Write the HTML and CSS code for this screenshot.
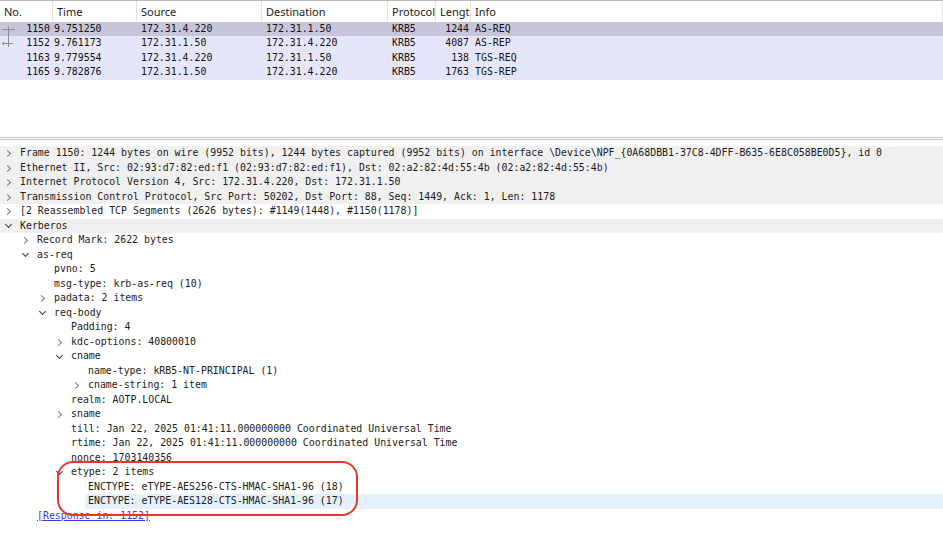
FILE: index.html
```html
<!DOCTYPE html>
<html>
<head>
<meta charset="utf-8">
<link rel="stylesheet" href="styles.css">
</head>
<body>
<div class="app">
  <section class="plist">
    <div class="prow phead">
      <div class="c c-no">No.</div>
      <div class="c c-time">Time</div>
      <div class="c c-src">Source</div>
      <div class="c c-dst">Destination</div>
      <div class="c c-proto">Protocol</div>
      <div class="c c-len">Length</div>
      <div class="c c-info">Info</div>
    </div>
    <div class="prow pdata sel">
      <div class="c c-no"><svg class="rel" width="14" height="14" viewBox="0 0 14 14"><path d="M1 7.5H14M7.5 4V14" stroke="#8f8f8f" stroke-width="1" fill="none"/></svg>1150</div>
      <div class="c c-time">9.751250</div>
      <div class="c c-src">172.31.4.220</div>
      <div class="c c-dst">172.31.1.50</div>
      <div class="c c-proto">KRB5</div>
      <div class="c c-len">1244</div>
      <div class="c c-info">AS-REQ</div>
    </div>
    <div class="prow pdata">
      <div class="c c-no"><svg class="rel" width="14" height="14" viewBox="0 0 14 14"><path d="M7.5 0V11M1 7.5H12M1 7.5L3 6M1 7.5L3 9" stroke="#8f8f8f" stroke-width="1" fill="none"/></svg>1152</div>
      <div class="c c-time">9.761173</div>
      <div class="c c-src">172.31.1.50</div>
      <div class="c c-dst">172.31.4.220</div>
      <div class="c c-proto">KRB5</div>
      <div class="c c-len">4087</div>
      <div class="c c-info">AS-REP</div>
    </div>
    <div class="prow pdata">
      <div class="c c-no">1163</div>
      <div class="c c-time">9.779554</div>
      <div class="c c-src">172.31.4.220</div>
      <div class="c c-dst">172.31.1.50</div>
      <div class="c c-proto">KRB5</div>
      <div class="c c-len">138</div>
      <div class="c c-info">TGS-REQ</div>
    </div>
    <div class="prow pdata">
      <div class="c c-no">1165</div>
      <div class="c c-time">9.782876</div>
      <div class="c c-src">172.31.1.50</div>
      <div class="c c-dst">172.31.4.220</div>
      <div class="c c-proto">KRB5</div>
      <div class="c c-len">1763</div>
      <div class="c c-info">TGS-REP</div>
    </div>
  </section>

  <section class="tree">
    <div class="trow grey l0"><span class="tw closed"></span><span class="tl">Frame 1150: 1244 bytes on wire (9952 bits), 1244 bytes captured (9952 bits) on interface \Device\NPF_{0A68DBB1-37C8-4DFF-B635-6E8C058BE0D5}, id 0</span></div>
    <div class="trow grey l0"><span class="tw closed"></span><span class="tl">Ethernet II, Src: 02:93:d7:82:ed:f1 (02:93:d7:82:ed:f1), Dst: 02:a2:82:4d:55:4b (02:a2:82:4d:55:4b)</span></div>
    <div class="trow grey l0"><span class="tw closed"></span><span class="tl">Internet Protocol Version 4, Src: 172.31.4.220, Dst: 172.31.1.50</span></div>
    <div class="trow grey l0"><span class="tw closed"></span><span class="tl">Transmission Control Protocol, Src Port: 50202, Dst Port: 88, Seq: 1449, Ack: 1, Len: 1178</span></div>
    <div class="trow l0"><span class="tw closed"></span><span class="tl">[2 Reassembled TCP Segments (2626 bytes): #1149(1448), #1150(1178)]</span></div>
    <div class="trow grey l0"><span class="tw open"></span><span class="tl">Kerberos</span></div>
    <div class="trow l1"><span class="tw closed"></span><span class="tl">Record Mark: 2622 bytes</span></div>
    <div class="trow l1"><span class="tw open"></span><span class="tl">as-req</span></div>
    <div class="trow l2"><span class="tw"></span><span class="tl">pvno: 5</span></div>
    <div class="trow l2"><span class="tw"></span><span class="tl">msg-type: krb-as-req (10)</span></div>
    <div class="trow l2"><span class="tw closed"></span><span class="tl">padata: 2 items</span></div>
    <div class="trow l2"><span class="tw open"></span><span class="tl">req-body</span></div>
    <div class="trow l3"><span class="tw"></span><span class="tl">Padding: 4</span></div>
    <div class="trow l3"><span class="tw closed"></span><span class="tl">kdc-options: 40800010</span></div>
    <div class="trow l3"><span class="tw open"></span><span class="tl">cname</span></div>
    <div class="trow l4"><span class="tw"></span><span class="tl">name-type: kRB5-NT-PRINCIPAL (1)</span></div>
    <div class="trow l4"><span class="tw closed"></span><span class="tl">cname-string: 1 item</span></div>
    <div class="trow l3"><span class="tw"></span><span class="tl">realm: AOTP.LOCAL</span></div>
    <div class="trow l3"><span class="tw closed"></span><span class="tl">sname</span></div>
    <div class="trow l3"><span class="tw"></span><span class="tl">till: Jan 22, 2025 01:41:11.000000000 Coordinated Universal Time</span></div>
    <div class="trow l3"><span class="tw"></span><span class="tl">rtime: Jan 22, 2025 01:41:11.000000000 Coordinated Universal Time</span></div>
    <div class="trow l3"><span class="tw"></span><span class="tl">nonce: 1703140356</span></div>
    <div class="trow l3"><span class="tw open"></span><span class="tl">etype: 2 items</span></div>
    <div class="trow l4"><span class="tw"></span><span class="tl">ENCTYPE: eTYPE-AES256-CTS-HMAC-SHA1-96 (18)</span></div>
    <div class="trow l4 hover"><span class="tw"></span><span class="tl">ENCTYPE: eTYPE-AES128-CTS-HMAC-SHA1-96 (17)</span></div>
    <div class="trow l1"><span class="tw"></span><span class="tl"><span class="link">[Response in: 1152]</span></span></div>
    <div class="annot"></div>
  </section>
</div>
</body>
</html>
```

FILE: styles.css
```css
html, body {
  margin: 0;
  padding: 0;
  background: #ffffff;
}
.app {
  width: 943px;
  height: 536px;
  overflow: hidden;
  display: flex;
  flex-direction: column;
}
.plist {
  height: 137px;
  border-top: 1px solid #b9b9b9;
  box-sizing: border-box;
}
.prow {
  display: grid;
  grid-template-columns: 53px 84px 125px 126px 48px 35px 1fr;
}
.c {
  white-space: nowrap;
  overflow: hidden;
}
.phead {
  height: 21px;
  font-family: "Noto Sans", "Open Sans", sans-serif;
  font-size: 11px;
  color: #1a1a1a;
}
.phead .c {
  height: 21px;
  line-height: 22px;
  padding-left: 4px;
  border-right: 1px solid #e3e3e3;
  text-overflow: clip;
}
.pdata {
  height: 14.4px;
  line-height: 14.4px;
  font-family: "DejaVu Sans Mono", monospace;
  font-size: 9.9px;
  color: #121212;
  background: #e6e6fa;
}
.pdata.sel {
  background: #c6c5da;
}
.pdata .c-no {
  position: relative;
  text-align: right;
  padding-right: 3px;
}
.pdata .c-time {
  padding-left: 1px;
}
.pdata .c-src,
.pdata .c-dst,
.pdata .c-proto,
.pdata .c-info {
  padding-left: 4px;
}
.pdata .c-len {
  text-align: right;
  padding-right: 2px;
}
.rel {
  position: absolute;
  left: 1px;
  top: 0;
}
.tree {
  position: relative;
  flex: 1;
  border-top: 3px double #c8c8c8;
  padding-top: 6px;
  font-family: "DejaVu Sans Mono", monospace;
  font-size: 9.9px;
  color: #1c1c1c;
}
.trow {
  height: 14.5px;
  line-height: 14.5px;
  display: flex;
  align-items: center;
  white-space: nowrap;
}
.trow.grey {
  background: #f0f0f0;
}
.l0 { padding-left: 3px; }
.l1 { padding-left: 20px; }
.l2 { padding-left: 37px; }
.l3 { padding-left: 54px; }
.l4 { padding-left: 71px; }
.tw {
  width: 14px;
  height: 14.5px;
  flex: none;
  position: relative;
}
.tw.closed::before {
  content: "";
  position: absolute;
  left: 2px;
  top: 5px;
  width: 4px;
  height: 4px;
  border-right: 1px solid #7a7a7a;
  border-bottom: 1px solid #7a7a7a;
  transform: rotate(-45deg);
}
.tw.open::before {
  content: "";
  position: absolute;
  left: 3px;
  top: 3.5px;
  width: 4px;
  height: 4px;
  border-right: 1px solid #3a3a3a;
  border-bottom: 1px solid #3a3a3a;
  transform: rotate(45deg);
}
.tl {
  flex: 1;
  padding-left: 3px;
  height: 14.5px;
}
.hover .tl {
  background: #e5f0fb;
}
.link {
  color: #3b3bd3;
  text-decoration: underline;
}
.annot {
  position: absolute;
  left: 57px;
  top: 321px;
  width: 297px;
  height: 51px;
  border: 2px solid #e03a2b;
  border-radius: 16px;
}
```
